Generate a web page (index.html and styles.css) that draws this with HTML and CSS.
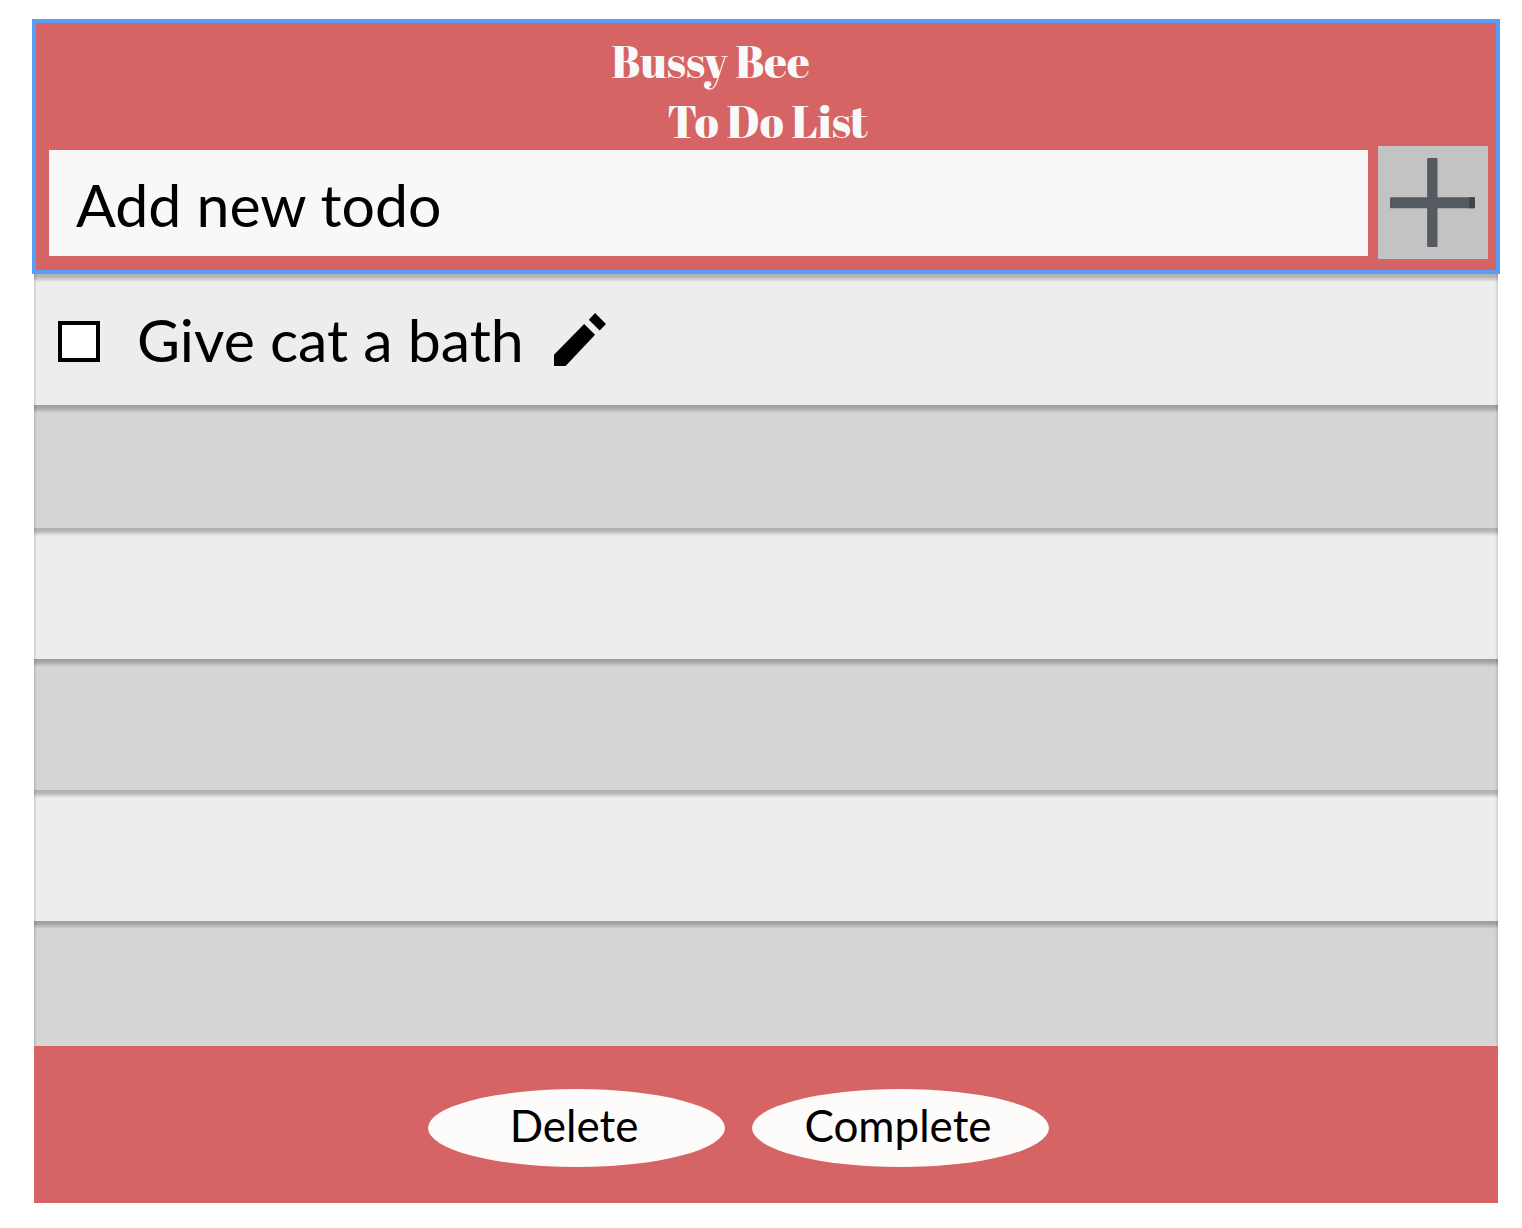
FILE: index.html
```html
<!DOCTYPE html>
<html lang="en">
<head>
<meta charset="utf-8">
<meta name="viewport" content="width=device-width, initial-scale=1">
<title>Bussy Bee To Do List</title>
<link rel="stylesheet" href="styles.css">
</head>
<body>
<main class="app">
  <header class="header">
    <h1 class="title">
      <span class="title-top">Bussy Bee</span>
      <span>To Do List</span>
    </h1>
    <form class="add-form">
      <input class="add-input" type="text" placeholder="Add new todo" aria-label="Add new todo">
      <button class="add-button" type="button" aria-label="Add">
        <svg class="plus" viewBox="120 84 254 266" aria-hidden="true">
          <rect x="231" y="84" width="31" height="266" rx="3" fill="#555a61"/>
          <rect x="120" y="201" width="254" height="33" rx="3" fill="#555a61"/>
          <path d="M357 201h14q3 0 3 3v27q0 3-3 3h-14z" fill="#414448"/>
        </svg>
      </button>
    </form>
  </header>
  <ul class="list">
    <li class="row">
      <input class="check" type="checkbox" id="todo-1">
      <label class="todo" for="todo-1">Give cat a bath</label>
      <button class="edit" type="button" aria-label="Edit">
        <svg class="pencil" viewBox="159 70 157 160" aria-hidden="true">
          <path d="M159 196v34h35l89-94-33-33zM283 70l33 33-19 20-33-33z"/>
        </svg>
      </button>
    </li>
    <li class="row row-short"></li>
    <li class="row"></li>
    <li class="row"></li>
    <li class="row"></li>
    <li class="row row-last"></li>
  </ul>
  <footer class="footer">
    <button class="action" type="button">Delete</button>
    <button class="action" type="button">Complete</button>
  </footer>
</main>
</body>
</html>
```
FILE: styles.css
```css
* {
  box-sizing: border-box;
}

body {
  margin: 0;
  padding: 19px 22px 25px 32px;
  background: #fff;
  color: #000;
  font-family: Lato, "Liberation Sans", sans-serif;
}

.header {
  padding: 14px 8px 11px 13px;
  border: 4px solid #5a9df8;
  background: #d66464;
}

.title {
  display: flex;
  flex-direction: column;
  align-items: center;
  gap: 12px;
  margin: 0;
  padding: 0 2px 1px 0;
  color: #f9f9f9;
  font: 400 44px/48px "Abril Fatface", "Liberation Serif", serif;
}

.title-top {
  padding-right: 114px;
}

.add-form {
  display: flex;
  align-items: center;
  gap: 10px;
}

.add-input {
  flex: 1;
  min-width: 0;
  height: 106px;
  padding: 4px 28px 0 27px;
  border: 0;
  background: #f8f8f8;
  font: inherit;
  font-size: 59px;
}

.add-input::placeholder {
  color: #000;
  opacity: 1;
}

.add-button {
  display: flex;
  align-items: center;
  width: 110px;
  height: 113px;
  padding: 0 12px;
  border: 0;
  background: #c3c3c3;
}

.plus {
  width: 85px;
  height: 89px;
}

.list {
  margin: 0 2px;
  padding: 0;
  list-style: none;
}

.row {
  display: flex;
  align-items: center;
  height: 131px;
  padding: 0 24px;
  background:
    linear-gradient(90deg, #0002, #0000 3px calc(100% - 3px), #0002),
    linear-gradient(#b0b0b0, #b6b6b6 3px, #ededed 8px);
}

.row:nth-child(even) {
  background:
    linear-gradient(90deg, #0002, #0000 3px calc(100% - 3px), #0002),
    linear-gradient(#9c9c9c, #a6a6a6 3px, #d5d5d5 8px);
}

.row-short {
  height: 123px;
}

.row-last {
  height: 125px;
}

.check {
  appearance: none;
  width: 42px;
  height: 41px;
  margin: 4px 0 0;
  border: 4px solid #000;
  background: #fff;
}

.todo {
  margin-left: 37px;
  font-size: 59px;
  line-height: 72px;
}

.edit {
  display: flex;
  margin-left: 30px;
  padding: 0;
  border: 0;
  background: none;
}

.pencil {
  width: 52px;
  height: 53px;
}

.footer {
  display: flex;
  justify-content: center;
  gap: 27px;
  margin: 0 2px;
  padding: 43px 56px 36px 0;
  background: #d66464;
}

.action {
  width: 297px;
  height: 78px;
  padding: 0 4px 6px 0;
  border: 0;
  border-radius: 50%;
  background: #fefcfa;
  color: #000;
  font: inherit;
  font-size: 44px;
}
```
